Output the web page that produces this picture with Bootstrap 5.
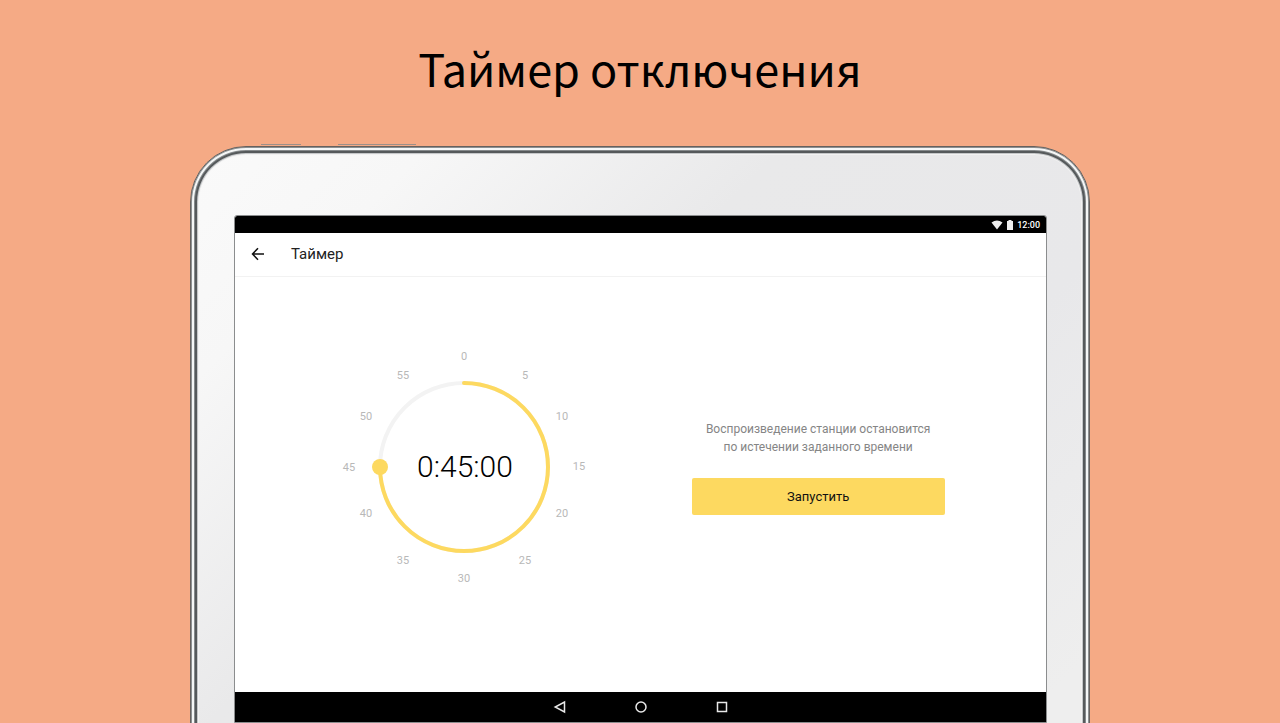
<!DOCTYPE html>
<html lang="ru">
<head>
<meta charset="utf-8">
<meta name="viewport" content="width=device-width, initial-scale=1">
<title>Таймер отключения</title>
<link href="https://cdn.jsdelivr.net/npm/bootstrap@5.3.0/dist/css/bootstrap.min.css" rel="stylesheet">
<style>
body { background: #f5aa85; color: #000; font-family: Roboto, "Liberation Sans", sans-serif; }
.promo-title { font-family: "Noto Sans CJK SC", "Noto Sans", sans-serif; font-size: 45px; line-height: 72px; padding: 32px 0 42px; }
.tablet {
  width: 100%; max-width: 900px; padding: 64px 38px 10px 39px; margin-bottom: -10px;
  border: 1px solid #66605d; border-radius: 56px 56px 0 0;
  background: linear-gradient(135deg, #fafafa 0%, #f7f7f7 16%, #e9e9ea 40%, #e8e8ea 68%, #eee 95%);
  box-shadow: inset 0 0 0 1px #8c9092, inset 0 0 0 3px #f4f6f6, inset 0 0 0 4px #85898b, inset 0 0 0 6px #55595b, inset 0 0 0 7px #c5c7c9, inset 0 0 0 8px #f2f2f2;
}
.tablet-body { padding: 5px; padding-bottom: 0; }
.side-key { position: absolute; top: -3px; height: 1px; background: #9b8f8a; }
.key-power { left: 70px; width: 40px; }
.key-volume { left: 147px; width: 78px; }
.app-screen { background: #fff; outline: 1px solid #8b8d8e; border-radius: 2px 2px 0 0; overflow: hidden; }
.status-bar { height: 17px; padding: 1px 6px 0 0; font-size: 9px; line-height: 16px; font-weight: 500; gap: 3px; }
.app-bar { height: 44px; padding: 0 16px 2px; gap: 26px; border-bottom: 1px solid #f2f2f2; }
.app-bar h2 { font-size: 15px; line-height: 20px; color: #222; }
.timer-area { padding-bottom: 35px; }
.dial { width: 254px; height: 254px; }
.dial-labels { font-size: 11px; fill: #b8b8b8; }
.dial-time { font-size: 30px; font-weight: 300; }
.start-panel { width: 253px; }
.start-panel p { font-size: 12px; line-height: 18px; color: #858585; margin-bottom: 22px; }
.btn-start { --bs-btn-bg: #fdd960; --bs-btn-hover-bg: #f7cf4d; --bs-btn-active-bg: #efc640; --bs-btn-border-radius: 2px; --bs-btn-font-size: 13px; --bs-btn-line-height: 21px; --bs-btn-padding-y: 8px; --bs-btn-border-width: 0px; --bs-btn-color: #111; }
.system-nav { height: 30px; gap: 65px; }
</style>
</head>
<body>
<div class="min-vh-100 d-flex flex-column align-items-center overflow-hidden">
  <h1 class="promo-title fw-normal text-center m-0">Таймер отключения</h1>
  <div class="tablet position-relative flex-grow-1 d-flex flex-column">
    <span class="side-key key-power"></span>
    <span class="side-key key-volume"></span>
    <div class="tablet-body flex-grow-1 d-flex flex-column">
      <main class="app-screen flex-grow-1 d-flex flex-column">
        <div class="status-bar bg-black text-white d-flex align-items-center justify-content-end">
          <svg width="12" height="10" viewBox="0 0 12 10" aria-hidden="true"><path d="M.5 2.600Q6-1.600 11.500 2.600L6 9.500Z" fill="#eee"/></svg>
          <svg width="8" height="10" viewBox="0 0 8 10" aria-hidden="true"><path d="M2.500 0h3v1H7v9H1V1h1.500Z" fill="#eee"/></svg>
          <span>12:00</span>
        </div>
        <header class="app-bar d-flex align-items-center">
          <button type="button" class="btn p-0 border-0 d-flex" aria-label="Назад">
            <svg width="14" height="14" viewBox="0 0 14 14" fill="none" stroke="#111" stroke-width="1.500"><path d="M7 1.200 1.500 7 7 12.800M1.500 7H13"/></svg>
          </button>
          <h2 class="fw-normal m-0">Таймер</h2>
        </header>
        <section class="timer-area flex-grow-1 d-flex flex-wrap align-items-center justify-content-evenly">
          <div>
            <input type="range" class="visually-hidden" min="0" max="60" step="5" value="45" aria-label="Таймер">
            <svg class="dial d-block" viewBox="-128 -127 254 254" text-anchor="middle">
              <circle r="84" fill="none" stroke="#f3f3f3" stroke-width="4"/>
              <path d="M0-84A84 84 0 1 1-84 0" fill="none" stroke="#fdd960" stroke-width="4" stroke-linecap="round"/>
              <circle cx="-84" r="8" fill="#fdd960"/>
              <text class="dial-time" x="1" y="10">0:45:00</text>
              <g class="dial-labels">
                <text x="0" y="-107">0</text>
                <text x="61" y="-88">5</text>
                <text x="98" y="-47">10</text>
                <text x="115" y="3">15</text>
                <text x="98" y="50">20</text>
                <text x="61" y="97">25</text>
                <text x="0" y="115">30</text>
                <text x="-61" y="97">35</text>
                <text x="-98" y="50">40</text>
                <text x="-115" y="4">45</text>
                <text x="-98" y="-47">50</text>
                <text x="-61" y="-88">55</text>
              </g>
            </svg>
          </div>
          <div class="start-panel text-center">
            <p>Воспроизведение станции остановится<br>по истечении заданного времени</p>
            <button type="button" class="btn btn-start w-100">Запустить</button>
          </div>
        </section>
        <nav class="system-nav bg-black d-flex align-items-center justify-content-center" aria-label="Система">
          <button type="button" class="btn p-0 border-0 d-flex" aria-label="Назад"><svg width="16" height="16" viewBox="0 0 16 16" fill="none" stroke="#e8e8e8" stroke-width="1.500"><path d="M12.500 3v10L3.200 8Z"/></svg></button>
          <button type="button" class="btn p-0 border-0 d-flex" aria-label="Домой"><svg width="16" height="16" viewBox="0 0 16 16" fill="none" stroke="#e8e8e8" stroke-width="1.500"><circle cx="8" cy="8" r="5"/></svg></button>
          <button type="button" class="btn p-0 border-0 d-flex" aria-label="Обзор"><svg width="16" height="16" viewBox="0 0 16 16" fill="none" stroke="#e8e8e8" stroke-width="1.500"><path d="M3.500 3.500h9v9h-9Z"/></svg></button>
        </nav>
      </main>
    </div>
  </div>
</div>
<script src="https://cdn.jsdelivr.net/npm/bootstrap@5.3.0/dist/js/bootstrap.bundle.min.js"></script>
</body>
</html>
